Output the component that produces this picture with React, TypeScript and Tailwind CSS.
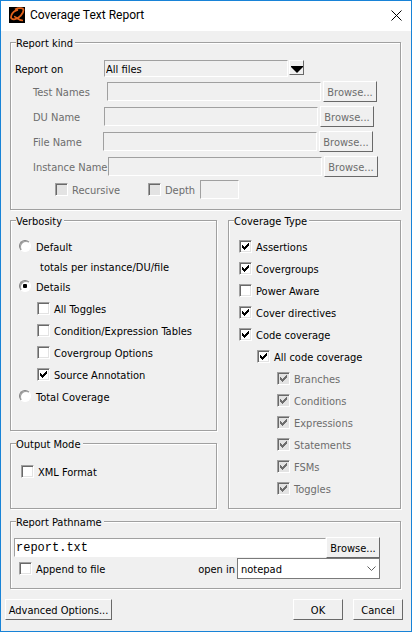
import React from "react";
import clsx from "clsx";

const RAISED =
  "shrink-0 border border-t-white border-l-white border-r-[#696969] border-b-[#696969] bg-[#f0f0f0] text-center whitespace-nowrap disabled:text-[#6d6d6d]";
const SUNKEN =
  "border border-t-[#a0a0a0] border-l-[#a0a0a0] border-r-white border-b-white";

function Group({
  title,
  className,
  children,
}: {
  title: string;
  className?: string;
  children: React.ReactNode;
}) {
  return (
    <fieldset className="min-w-0 border border-[#a0a0a0] shadow-[1px_1px_0_#fff,inset_1px_1px_0_#fff] last:flex-1">
      <legend className="ml-[5px] h-[15px] bg-[#f0f0f0] pr-0.5 leading-[17px]">
        {title}
      </legend>
      <div className={className}>{children}</div>
    </fieldset>
  );
}

function Check({
  label,
  checked = false,
  disabled = false,
  className,
}: {
  label: string;
  checked?: boolean;
  disabled?: boolean;
  className?: string;
}) {
  return (
    <label
      className={clsx(
        "flex h-[22px] items-center gap-1",
        disabled && "text-[#6d6d6d]",
        className,
      )}
    >
      <span className="relative block size-[13px] shrink-0">
        <input
          type="checkbox"
          defaultChecked={checked}
          disabled={disabled}
          className="peer block size-[13px] appearance-none border border-t-[#a0a0a0] border-r-white border-b-white border-l-[#a0a0a0] bg-white shadow-[inset_1px_1px_0_#696969,inset_-1px_-1px_0_#e3e3e3] disabled:bg-[#e3e3e3]"
        />
        <svg
          viewBox="0 0 13 13"
          className="pointer-events-none absolute inset-0 hidden size-[13px] peer-checked:block"
          fill="currentColor"
          shapeRendering="crispEdges"
          aria-hidden="true"
        >
          <path d="M3 5h1v3H3zM4 6h1v3H4zM5 7h1v3H5zM6 6h1v3H6zM7 5h1v3H7zM8 4h1v3H8zM9 3h1v3H9z" />
        </svg>
      </span>
      <span className="pt-0.5">{label}</span>
    </label>
  );
}

function Radio({ label, checked = false }: { label: string; checked?: boolean }) {
  return (
    <label className="flex h-[22px] items-center gap-1 pl-2">
      <span className="relative block size-[13px] shrink-0">
        <input
          type="radio"
          name="verbosity"
          defaultChecked={checked}
          className="peer block size-3 appearance-none rounded-full border border-t-[#808080] border-r-white border-b-white border-l-[#808080] bg-white shadow-[inset_1px_1px_0_#a0a0a0]"
        />
        <span className="pointer-events-none absolute top-1 left-1 hidden size-1 rounded-[1px] bg-black peer-checked:block" />
      </span>
      <span className="pt-0.5">{label}</span>
    </label>
  );
}

function NameRow({ id, label, width }: { id: string; label: string; width: string }) {
  return (
    <div className="flex h-[21px] items-center pl-[22px]">
      <label
        htmlFor={id}
        className={clsx("shrink-0 pt-0.5 whitespace-nowrap text-[#6d6d6d]", width)}
      >
        {label}
      </label>
      <input id={id} disabled className={clsx("mr-0.5 h-[19px] w-[214px] px-1", SUNKEN)} />
      <button type="button" disabled className={clsx("h-[21px] w-[54px] pt-0.5", RAISED)}>
        Browse...
      </button>
    </div>
  );
}

export default function App() {
  return (
    <div className="flex min-h-screen flex-col border border-[#1883d7] bg-[#f0f0f0] font-['DejaVu_Sans_Condensed','Noto_Sans',sans-serif] text-[11px] leading-[15px] text-black">
      <header className="flex h-[30px] items-center bg-white pr-[9px] pb-0.5 pl-2">
        <svg viewBox="0 0 16 16" className="size-4" aria-hidden="true">
          <rect width="16" height="16" />
          <path
            d="M6 2.500C9 .8 14.500.6 14.500 3 14.500 6.500 10 11.600 6 12.200 3 12.600 1.300 11.400 2.300 8.500 3.100 6 5.500 3.500 9 2.800"
            fill="none"
            stroke="#e2621b"
            strokeWidth="1.800"
          />
          <path d="M5 9.500c2.500.2 4 4 9 4" fill="none" stroke="#e2621b" strokeWidth="1.700" />
        </svg>
        <h1 className="ml-[5px] flex-1 font-[Roboto,'Noto_Sans',sans-serif] text-xs">
          Coverage Text Report
        </h1>
        <button type="button" aria-label="Close">
          <svg viewBox="0 0 11 11" className="size-[11px]" aria-hidden="true">
            <path d="M.5.5l10 10M10.500.5l-10 10" stroke="#000" />
          </svg>
        </button>
      </header>

      <main className="pt-1 pr-2.5 pl-[9px]">
        <Group title="Report kind" className="pt-2.5 pb-2.5">
          <div className="mb-[3px] flex h-[18px] items-start pl-1">
            <label htmlFor="report-on" className="w-[89px] pt-0.5">
              Report on
            </label>
            <select
              id="report-on"
              className={clsx(
                "h-[17px] w-[184px] appearance-none pt-px pl-px leading-[15px]",
                SUNKEN,
              )}
            >
              <option>All files</option>
            </select>
            <button
              type="button"
              aria-label="Show report choices"
              className={clsx("ml-px flex h-[15px] w-[15px] justify-end pt-[5px]", RAISED)}
            >
              <svg viewBox="0 0 12 7" className="h-[7px] w-3" aria-hidden="true">
                <path d="M0 0h12v1L6 7 0 1z" />
              </svg>
            </button>
          </div>
          <div className="flex flex-col gap-1">
            <NameRow id="tests" label="Test Names" width="w-[74px]" />
            <NameRow id="du" label="DU Name" width="w-[71px]" />
            <NameRow id="file" label="File Name" width="w-[70px]" />
            <NameRow id="instance" label="Instance Name" width="w-[75px]" />
          </div>
          <div className="mt-[3px] flex h-[19px] items-center pl-11">
            <Check label="Recursive" disabled className="w-[93px]" />
            <Check label="Depth" disabled className="w-[52px]" />
            <input aria-label="Depth value" disabled className={clsx("h-[19px] w-[39px]", SUNKEN)} />
          </div>
        </Group>

        <div className="mt-[3px] mb-[5px] grid grid-cols-[207fr_173fr] gap-[11px]">
          <div className="flex flex-col gap-[5px]">
            <Group title="Verbosity" className="pt-[7px] pb-[23px]">
              <Radio label="Default" />
              <p className="h-[18px] pl-[29px] leading-[21px]">totals per instance/DU/file</p>
              <Radio label="Details" checked />
              <div className="pl-[26px]">
                <Check label="All Toggles" />
                <Check label="Condition/Expression Tables" />
                <Check label="Covergroup Options" />
                <Check label="Source Annotation" checked />
              </div>
              <Radio label="Total Coverage" />
            </Group>
            <Group title="Output Mode" className="pt-[9px] pb-[26px] pl-2.5">
              <Check label="XML Format" />
            </Group>
          </div>
          <Group title="Coverage Type" className="pt-[7px] pb-[9px]">
            <div className="pl-2.5">
              <Check label="Assertions" checked />
              <Check label="Covergroups" checked />
              <Check label="Power Aware" />
              <Check label="Cover directives" checked />
              <Check label="Code coverage" checked />
            </div>
            <Check label="All code coverage" checked className="pl-7" />
            <div className="pl-12">
              <Check label="Branches" checked disabled />
              <Check label="Conditions" checked disabled />
              <Check label="Expressions" checked disabled />
              <Check label="Statements" checked disabled />
              <Check label="FSMs" checked disabled />
              <Check label="Toggles" checked disabled />
            </div>
          </Group>
        </div>

        <Group title="Report Pathname" className="pt-2 pr-5 pb-[9px] pl-[3px]">
          <div className="flex items-center">
            <input
              aria-label="Report pathname"
              defaultValue="report.txt"
              className={clsx(
                "h-[19px] min-w-0 flex-1 bg-white pt-px pl-px font-['Liberation_Mono',monospace] text-xs",
                SUNKEN,
              )}
            />
            <button type="button" className={clsx("h-[21px] w-[54px] pt-0.5", RAISED)}>
              Browse...
            </button>
          </div>
          <div className="flex h-[21px] items-center pl-[5px]">
            <Check label="Append to file" className="flex-1" />
            <label htmlFor="open-in" className="mr-0.5 pt-0.5">
              open in
            </label>
            <span className="relative block h-[21px] w-[143px]">
              <select
                id="open-in"
                className="block h-[21px] w-full appearance-none border border-[#7a7a7a] bg-white pt-0.5 pl-[3px]"
              >
                <option>notepad</option>
              </select>
              <svg
                viewBox="0 0 9 5"
                className="pointer-events-none absolute top-2 right-1 h-[5px] w-[9px]"
                fill="none"
                stroke="#606060"
                aria-hidden="true"
              >
                <path d="M.5.5l4 4 4-4" />
              </svg>
            </span>
          </div>
        </Group>
      </main>

      <footer className="flex gap-2.5 pt-2.5 pr-2 pl-1">
        <button type="button" className={clsx("mr-auto h-[21px] w-[107px] pt-0.5", RAISED)}>
          Advanced Options...
        </button>
        <button type="button" className={clsx("h-[21px] w-[50px] pt-0.5", RAISED)}>
          OK
        </button>
        <button type="button" className={clsx("h-[21px] w-[50px] pt-0.5", RAISED)}>
          Cancel
        </button>
      </footer>
    </div>
  );
}
